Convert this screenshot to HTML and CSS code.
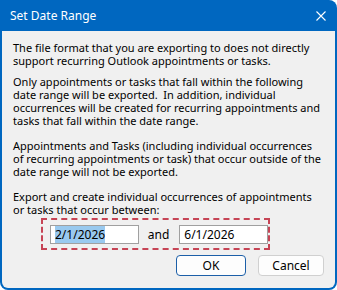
FILE: index.html
```html
<!DOCTYPE html>
<html>
<head>
<meta charset="utf-8">
<link rel="stylesheet" href="styles.css">
</head>
<body>
<div class="window">
  <div class="titlebar">
    <span class="title">Set Date Range</span>
    <svg class="close" width="10" height="10" viewBox="0 0 10 10"><path d="M0.5 0.5L9.5 9.5M9.5 0.5L0.5 9.5" stroke="#fff" stroke-width="1.1" fill="none"/></svg>
  </div>
  <div class="client">
    <p class="para p1">The file format that you are exporting to does not directly<br>support recurring Outlook appointments or tasks.</p>
    <p class="para p2">Only appointments or tasks that fall within the following<br>date range will be exported.&nbsp; In addition, individual<br>occurrences will be created for recurring appointments and<br>tasks that fall within the date range.</p>
    <p class="para p3">Appointments and Tasks (including individual occurrences<br>of recurring appointments or task) that occur outside of the<br>date range will not be exported.</p>
    <p class="para p4">Export and create individual occurrences of appointments<br>or tasks that occur between:</p>
    <div class="range">
      <div class="field"><span class="sel">2/1/2026</span></div>
      <span class="and">and</span>
      <div class="field">6/1/2026</div>
    </div>
    <div class="buttons">
      <div class="btn default">OK</div>
      <div class="btn">Cancel</div>
    </div>
  </div>
</div>
</body>
</html>
```
FILE: styles.css
```css
html, body {
  margin: 0;
  padding: 0;
  background: #ffffff;
}
.window {
  width: 337px;
  height: 290px;
  box-sizing: border-box;
  background: #0067c0;
  border-radius: 0 8px 8px 8px;
  padding: 0 2px 2px 2px;
  display: flex;
  flex-direction: column;
  font-family: "Noto Sans", "Open Sans", sans-serif;
}
.titlebar {
  height: 31px;
  flex: none;
  display: flex;
  align-items: center;
  justify-content: space-between;
  padding: 0 9px 0 8px;
  color: #ffffff;
}
.title {
  font-size: 12px;
}
.close {
  display: block;
}
.client {
  flex: 1;
  background: #f0f0f0;
  border-radius: 0 0 6px 6px;
  padding: 10px 10px 0 11px;
}
.para {
  margin: 0;
  font-size: 11px;
  line-height: 13px;
  color: #000;
  white-space: nowrap;
}
.p2 { margin-top: 8px; }
.p3 { margin-top: 12px; }
.p4 { margin-top: 12px; }
.range {
  margin: 2px 0 0 28px;
  width: 229px;
  height: 32px;
  box-sizing: border-box;
  border: 2px dashed #c64455;
  display: flex;
  align-items: center;
  padding: 0 0 0 7px;
  gap: 9px;
}
.field {
  width: 89px;
  height: 19px;
  box-sizing: border-box;
  border: 1px solid #a0a0a0;
  background: #fff;
  font-size: 12px;
  line-height: 17px;
  padding-left: 4px;
  color: #000;
}
.sel {
  background: #99c9ef;
}
.and {
  font-size: 12px;
  margin-right: 1px;
}
.buttons {
  display: flex;
  justify-content: flex-end;
  gap: 12px;
  margin-top: 5px;
  padding-right: 1px;
}
.btn {
  width: 66px;
  height: 21px;
  box-sizing: border-box;
  border: 1px solid #d0d0d0;
  border-radius: 4px;
  background: #fdfdfd;
  font-size: 12px;
  line-height: 19px;
  text-align: center;
  color: #000;
}
.btn.default {
  width: 70px;
  border-color: #1c5fa8;
}
```
